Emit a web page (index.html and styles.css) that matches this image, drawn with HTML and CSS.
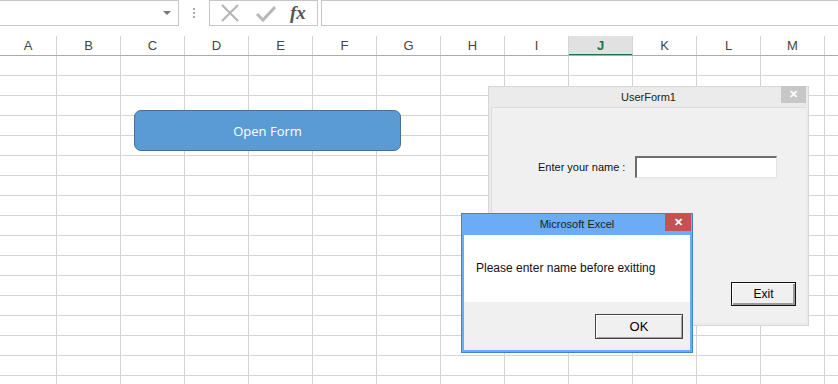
FILE: index.html
```html
<!DOCTYPE html>
<html lang="en">
<head>
    <meta charset="UTF-8">
    <title>Excel - UserForm</title>
    <link rel="stylesheet" href="styles.css">
</head>
<body>
    <div class="formula-bar">
        <div class="name-box"><span class="arrow"></span></div>
        <div class="grip"><i></i><i></i><i></i></div>
        <div class="fx-box">
            <svg width="20" height="20" viewBox="0 0 20 20"><path d="M2 2 L18 18 M18 2 L2 18" stroke="#b4b4b4" stroke-width="2" fill="none"/></svg>
            <svg width="20" height="20" viewBox="0 0 20 20"><path d="M1 11 L7 17 L19 4" stroke="#b8b8b8" stroke-width="3" fill="none"/></svg>
            <span class="fx">fx</span>
        </div>
        <div class="formula-input"></div>
    </div>

    <div class="col-headers">
        <div class="col first">A</div>
        <div class="col">B</div>
        <div class="col">C</div>
        <div class="col">D</div>
        <div class="col">E</div>
        <div class="col">F</div>
        <div class="col">G</div>
        <div class="col">H</div>
        <div class="col">I</div>
        <div class="col active">J</div>
        <div class="col">K</div>
        <div class="col">L</div>
        <div class="col">M</div>
    </div>

    <div class="sheet">
        <button class="open-form">Open Form</button>

        <div class="userform">
            <div class="uf-title">UserForm1<span class="uf-close">&#x2715;</span></div>
            <div class="uf-client">
                <div class="uf-row">
                    <label class="uf-label">Enter your name :</label>
                    <input class="uf-input" type="text">
                </div>
                <div class="uf-actions">
                    <button class="win-btn exit">Exit</button>
                </div>
            </div>
        </div>

        <div class="msgbox">
            <div class="mb-title">Microsoft Excel<span class="mb-close">&#x2715;</span></div>
            <div class="mb-body">Please enter name before exitting</div>
            <div class="mb-footer">
                <button class="win-btn ok">OK</button>
            </div>
        </div>
    </div>
</body>
</html>
```

FILE: styles.css
```css
body {
    margin: 0;
    padding: 0;
    font-family: "Liberation Sans", Arial, sans-serif;
    background-color: #fff;
    width: 838px;
    height: 384px;
    overflow: hidden;
}

/* formula bar */
.formula-bar {
    display: flex;
    height: 26px;
    background-color: #fff;
}

.name-box {
    width: 178px;
    height: 24px;
    margin-left: -1px;
    border: 1px solid #c6c6c6;
    position: relative;
}

.name-box .arrow {
    position: absolute;
    right: 7px;
    top: 10px;
    border-left: 4px solid transparent;
    border-right: 4px solid transparent;
    border-top: 4px solid #777;
}

.grip {
    width: 30px;
    display: flex;
    flex-direction: column;
    align-items: center;
    justify-content: center;
    gap: 2px;
}

.grip i {
    width: 2px;
    height: 2px;
    background-color: #aaa;
}

.fx-box {
    height: 24px;
    border: 1px solid #c6c6c6;
    display: flex;
    align-items: center;
    gap: 16px;
    padding-left: 10px;
    width: 97px;
}

.fx {
    font-family: "Liberation Serif", serif;
    font-style: italic;
    font-weight: bold;
    font-size: 19px;
    color: #555;
    margin-left: -2px;
}

.formula-input {
    flex: 1;
    height: 24px;
    margin-left: 3px;
    margin-right: -1px;
    border: 1px solid #c6c6c6;
}

/* column headers */
.col-headers {
    display: flex;
    margin-top: 10px;
    height: 19px;
    border-bottom: 1px solid #ababab;
    overflow: hidden;
}

.col {
    flex: 0 0 64px;
    box-sizing: border-box;
    border-right: 1px solid #d4d4d4;
    text-align: center;
    font-size: 13px;
    line-height: 19px;
    color: #444;
}

.col.first {
    flex-basis: 57px;
}

.col.active {
    background-color: #e1e1e1;
    border-bottom: 2px solid #217346;
    color: #217346;
    font-weight: bold;
    height: 20px;
}

/* grid */
.sheet {
    position: relative;
    height: 328px;
    background-image:
        repeating-linear-gradient(to bottom, transparent 0 19px, #d4d4d4 19px 20px),
        repeating-linear-gradient(to right, transparent 0 63px, #d4d4d4 63px 64px);
    background-position: 0 0, -7px 0;
}

.open-form {
    position: absolute;
    left: 134px;
    top: 54px;
    width: 267px;
    height: 41px;
    border: 1px solid #41719c;
    border-radius: 7px;
    background-color: #5b9bd5;
    color: #fff;
    font-family: "Open Sans", sans-serif;
    font-size: 13px;
    padding: 0;
}

/* user form */
.userform {
    position: absolute;
    left: 488px;
    top: 30px;
    width: 319px;
    height: 238px;
    border: 1px solid #d6d6d6;
    background-color: #ebebeb;
    display: flex;
    flex-direction: column;
}

.uf-title {
    height: 20px;
    font-size: 11px;
    line-height: 20px;
    text-align: center;
    color: #222;
    position: relative;
}

.uf-close {
    position: absolute;
    right: 2px;
    top: -1px;
    width: 25px;
    height: 17px;
    line-height: 17px;
    background-color: #c7c7c7;
    color: #fff;
    font-size: 11px;
    font-weight: bold;
}

.uf-client {
    flex: 1;
    margin: 0 2px 2px 2px;
    background-color: #f0f0f0;
    border-top: 1px solid #dcdcdc;
    border-left: 1px solid #dcdcdc;
    display: flex;
    flex-direction: column;
}

.uf-row {
    display: flex;
    align-items: center;
    gap: 10px;
    margin-top: 48px;
    padding-left: 46px;
}

.uf-label {
    font-size: 11px;
    color: #111;
}

.uf-input {
    width: 139px;
    height: 19px;
    margin: 0;
    padding: 0;
    border-style: solid;
    border-width: 2px 1px 1px 2px;
    border-color: #6e6e6e #e3e3e3 #e3e3e3 #6e6e6e;
    background-color: #fff;
}

.uf-actions {
    display: flex;
    justify-content: flex-end;
    margin-top: 104px;
    padding-right: 10px;
}

.win-btn {
    background-color: #f0f0f0;
    border: 1px solid #111;
    box-shadow: inset 1px 1px 0 #fff, inset -2px -2px 0 #9a9a9a;
    font-family: "Liberation Sans", Arial, sans-serif;
    font-size: 12px;
    color: #000;
    padding: 0;
}

.win-btn.exit {
    width: 65px;
    height: 24px;
}

/* message box */
.msgbox {
    position: absolute;
    left: 461px;
    top: 157px;
    width: 230px;
    height: 138px;
    border: 1px solid #3f82d8;
    background-color: #6cabf6;
    display: flex;
    flex-direction: column;
}

.mb-title {
    height: 21px;
    font-size: 11px;
    line-height: 21px;
    text-align: center;
    color: #222;
    position: relative;
}

.mb-close {
    position: absolute;
    right: 1px;
    top: 0;
    width: 26px;
    height: 17px;
    line-height: 17px;
    background-color: #c75050;
    color: #fff;
    font-size: 11px;
    font-weight: bold;
}

.mb-body {
    margin: 0 2px;
    height: 67px;
    background-color: #fff;
    padding-left: 12px;
    font-size: 12px;
    line-height: 67px;
    color: #111;
}

.mb-footer {
    flex: 1;
    margin: 0 2px 2px 2px;
    background-color: #f0f0f0;
    display: flex;
    justify-content: flex-end;
    align-items: flex-start;
    padding: 12px 7px 0 0;
}

.win-btn.ok {
    width: 88px;
    height: 25px;
    border-color: #444;
    box-shadow: inset 1px 1px 0 #fff, inset -1px -1px 0 #a0a0a0;
    font-size: 13px;
}
```
